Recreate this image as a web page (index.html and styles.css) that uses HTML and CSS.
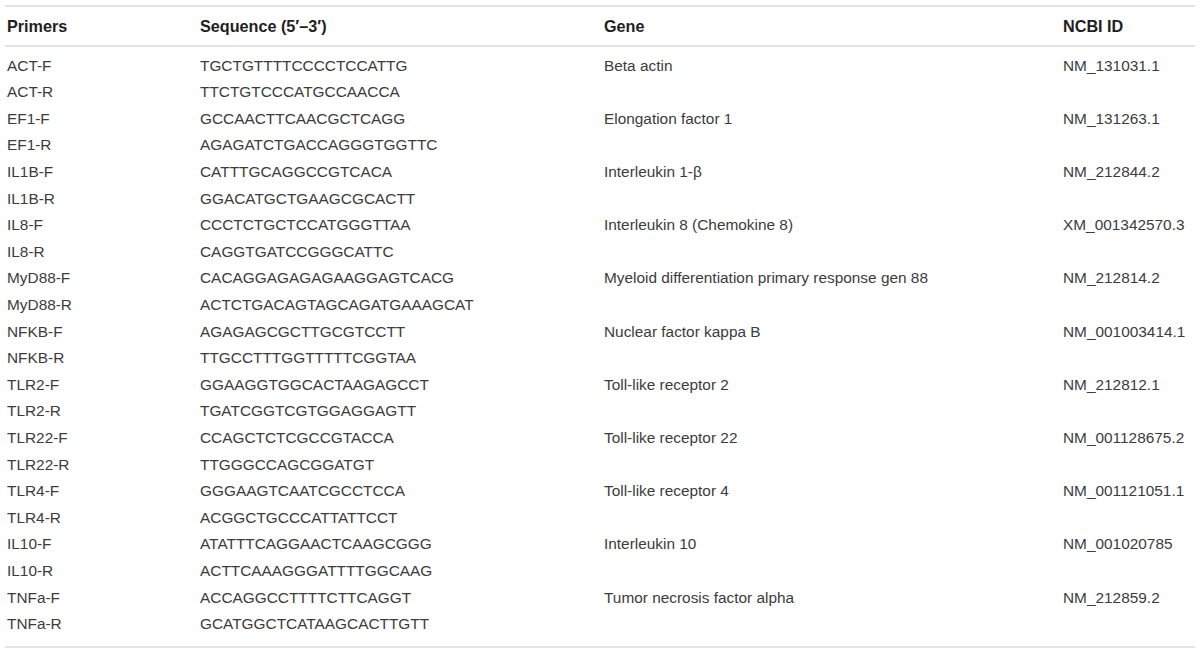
FILE: index.html
```html
<!DOCTYPE html>
<html>
<head>
<meta charset="utf-8">
<link rel="stylesheet" href="styles.css">
</head>
<body>
<table class="primers">
  <colgroup>
    <col class="c-primer">
    <col class="c-seq">
    <col class="c-gene">
    <col class="c-id">
  </colgroup>
  <thead>
    <tr><th>Primers</th><th>Sequence (5′–3′)</th><th>Gene</th><th>NCBI ID</th></tr>
  </thead>
  <tbody>
    <tr><td>ACT-F</td><td>TGCTGTTTTCCCCTCCATTG</td><td>Beta actin</td><td>NM_131031.1</td></tr>
    <tr><td>ACT-R</td><td>TTCTGTCCCATGCCAACCA</td><td></td><td></td></tr>
    <tr><td>EF1-F</td><td>GCCAACTTCAACGCTCAGG</td><td>Elongation factor 1</td><td>NM_131263.1</td></tr>
    <tr><td>EF1-R</td><td>AGAGATCTGACCAGGGTGGTTC</td><td></td><td></td></tr>
    <tr><td>IL1B-F</td><td>CATTTGCAGGCCGTCACA</td><td>Interleukin 1-β</td><td>NM_212844.2</td></tr>
    <tr><td>IL1B-R</td><td>GGACATGCTGAAGCGCACTT</td><td></td><td></td></tr>
    <tr><td>IL8-F</td><td>CCCTCTGCTCCATGGGTTAA</td><td>Interleukin 8 (Chemokine 8)</td><td>XM_001342570.3</td></tr>
    <tr><td>IL8-R</td><td>CAGGTGATCCGGGCATTC</td><td></td><td></td></tr>
    <tr><td>MyD88-F</td><td>CACAGGAGAGAGAAGGAGTCACG</td><td>Myeloid differentiation primary response gen 88</td><td>NM_212814.2</td></tr>
    <tr><td>MyD88-R</td><td>ACTCTGACAGTAGCAGATGAAAGCAT</td><td></td><td></td></tr>
    <tr><td>NFKB-F</td><td>AGAGAGCGCTTGCGTCCTT</td><td>Nuclear factor kappa B</td><td>NM_001003414.1</td></tr>
    <tr><td>NFKB-R</td><td>TTGCCTTTGGTTTTTCGGTAA</td><td></td><td></td></tr>
    <tr><td>TLR2-F</td><td>GGAAGGTGGCACTAAGAGCCT</td><td>Toll-like receptor 2</td><td>NM_212812.1</td></tr>
    <tr><td>TLR2-R</td><td>TGATCGGTCGTGGAGGAGTT</td><td></td><td></td></tr>
    <tr><td>TLR22-F</td><td>CCAGCTCTCGCCGTACCA</td><td>Toll-like receptor 22</td><td>NM_001128675.2</td></tr>
    <tr><td>TLR22-R</td><td>TTGGGCCAGCGGATGT</td><td></td><td></td></tr>
    <tr><td>TLR4-F</td><td>GGGAAGTCAATCGCCTCCA</td><td>Toll-like receptor 4</td><td>NM_001121051.1</td></tr>
    <tr><td>TLR4-R</td><td>ACGGCTGCCCATTATTCCT</td><td></td><td></td></tr>
    <tr><td>IL10-F</td><td>ATATTTCAGGAACTCAAGCGGG</td><td>Interleukin 10</td><td>NM_001020785</td></tr>
    <tr><td>IL10-R</td><td>ACTTCAAAGGGATTTTGGCAAG</td><td></td><td></td></tr>
    <tr><td>TNFa-F</td><td>ACCAGGCCTTTTCTTCAGGT</td><td>Tumor necrosis factor alpha</td><td>NM_212859.2</td></tr>
    <tr><td>TNFa-R</td><td>GCATGGCTCATAAGCACTTGTT</td><td></td><td></td></tr>
  </tbody>
</table>
</body>
</html>
```

FILE: styles.css
```css
html, body {
  margin: 0;
  padding: 0;
  background: #ffffff;
}

body {
  font-family: "Liberation Sans", Arial, Helvetica, sans-serif;
  font-size: 15.4px;
  color: #3c3c3c;
}

.primers {
  margin: 5px 5px 0 5px;
  width: 1190px;
  table-layout: fixed;
  border-collapse: separate;
  border-spacing: 0;
}

.c-primer { width: 193px; }
.c-seq { width: 404px; }
.c-gene { width: 459px; }
.c-id { width: 134px; }

.primers th {
  text-align: left;
  font-weight: bold;
  font-size: 16.2px;
  color: #1e1e1e;
  height: 38px;
  padding: 0 0 0 2px;
  border-top: 2px solid #e3e3e3;
  border-bottom: 2px solid #e3e3e3;
  vertical-align: middle;
}

.primers td {
  padding: 0 0 0 2px;
  height: 26.6px;
  line-height: 26.6px;
  white-space: nowrap;
  vertical-align: middle;
}

.primers tbody tr:first-child td {
  padding-top: 5.7px;
}

.primers tbody tr:last-child td {
  padding-bottom: 8px;
  border-bottom: 2px solid #e3e3e3;
}
```
